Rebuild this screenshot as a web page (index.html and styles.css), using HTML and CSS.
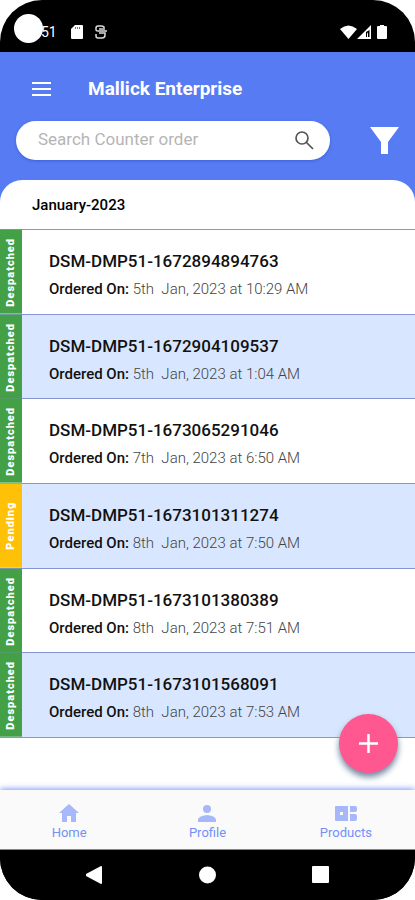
FILE: index.html
```html
<!DOCTYPE html>
<html lang="en">
<head>
  <meta charset="UTF-8">
  <meta name="viewport" content="width=device-width, initial-scale=1.0">
  <title>Mallick Enterprise</title>
  <link rel="stylesheet" href="styles.css">
</head>
<body>
  <div class="phone">
    <div class="status-bar">
      <span class="camera"></span>
      <span class="time">51</span>
      <svg class="sd-icon" width="12" height="14" viewBox="0 0 12 14"><path fill="#fff" d="M4 0h7q1 0 1 1v12q0 1-1 1H1q-1 0-1-1V4z"/><path stroke="#777" d="M4.500 2v2M6.500 2v2M8.500 2v2"/></svg>
      <svg class="s-icon" width="12" height="14" viewBox="0 0 12 14" fill="none" stroke="#ddd" stroke-width="1.500"><path d="M9 3V2Q8 1 6 1H3Q1 1 1 3v2q0 1 2 1h9M1 9v2q0 2 2 2h4q3 0 3-3V8H4M4 4h6"/></svg>
      <div class="status-right">
        <svg width="17" height="14" viewBox="0 0 17 14"><path fill="#fff" d="M0 4Q8.500-3 17 4L8.500 14z"/></svg>
        <svg width="14" height="14" viewBox="0 0 14 14"><path fill="#fff" fill-rule="evenodd" d="M14 0v14H0zM12.500 5L9 7v5h1V9l1-2v5h1.500z"/></svg>
        <svg class="battery" width="10" height="14" viewBox="0 0 10 14"><path fill="#fff" d="M3 0h4v1h2q1 0 1 1v11q0 1-1 1H1q-1 0-1-1V2q0-1 1-1h2z"/></svg>
      </div>
    </div>

    <header class="header">
      <div class="title-row">
        <button class="icon-button" aria-label="Menu">
          <svg width="19" height="14" viewBox="0 0 19 14"><path stroke="#fff" stroke-width="2" d="M0 1h19M0 7h19M0 13h19"/></svg>
        </button>
        <h1>Mallick Enterprise</h1>
      </div>
      <div class="search-row">
        <form class="search">
          <input type="text" placeholder="Search Counter order" aria-label="Search Counter order">
          <button type="button" class="icon-button" aria-label="Search">
            <svg width="19" height="19" viewBox="0 0 19 19" fill="none" stroke="#555" stroke-width="1.700"><circle cx="7" cy="7" r="6"/><path d="M11 11l7 7"/></svg>
          </button>
        </form>
        <button class="icon-button" aria-label="Filter">
          <svg width="29" height="27" viewBox="0 0 29 27"><path fill="#fff" d="M0 0h29L18 15v12h-7V15z"/></svg>
        </button>
      </div>
    </header>

    <main class="content">
      <section class="panel">
        <h2>January-2023</h2>
        <ul class="orders">
          <li class="order">
            <span class="status">Despatched</span>
            <div class="details">
              <h3>DSM-DMP51-1672894894763</h3>
              <p><b>Ordered On:</b> 5th&nbsp; Jan, 2023 at 10:29 AM</p>
            </div>
          </li>
          <li class="order">
            <span class="status">Despatched</span>
            <div class="details">
              <h3>DSM-DMP51-1672904109537</h3>
              <p><b>Ordered On:</b> 5th&nbsp; Jan, 2023 at 1:04 AM</p>
            </div>
          </li>
          <li class="order">
            <span class="status">Despatched</span>
            <div class="details">
              <h3>DSM-DMP51-1673065291046</h3>
              <p><b>Ordered On:</b> 7th&nbsp; Jan, 2023 at 6:50 AM</p>
            </div>
          </li>
          <li class="order">
            <span class="status pending">Pending</span>
            <div class="details">
              <h3>DSM-DMP51-1673101311274</h3>
              <p><b>Ordered On:</b> 8th&nbsp; Jan, 2023 at 7:50 AM</p>
            </div>
          </li>
          <li class="order">
            <span class="status">Despatched</span>
            <div class="details">
              <h3>DSM-DMP51-1673101380389</h3>
              <p><b>Ordered On:</b> 8th&nbsp; Jan, 2023 at 7:51 AM</p>
            </div>
          </li>
          <li class="order">
            <span class="status">Despatched</span>
            <div class="details">
              <h3>DSM-DMP51-1673101568091</h3>
              <p><b>Ordered On:</b> 8th&nbsp; Jan, 2023 at 7:53 AM</p>
            </div>
          </li>
        </ul>
      </section>
      <button class="add-button" aria-label="Add order">
        <svg width="19" height="19" viewBox="0 0 19 19"><path stroke="#fff" stroke-width="2.500" d="M9.500 0v19M0 9.500h19"/></svg>
      </button>
    </main>

    <nav class="tabs">
      <a href="#home">
        <svg width="20" height="18" viewBox="0 0 20 18"><path fill="#a6b8fa" d="M10 0l10 9h-3v9h-5v-6H8v6H3V9H0z"/></svg>
        Home
      </a>
      <a href="#profile">
        <svg width="18" height="18" viewBox="0 0 18 18" fill="#a6b8fa"><circle cx="9" cy="5" r="4"/><path d="M0 18v-2q0-4 9-5 9 1 9 5v2z"/></svg>
        Profile
      </a>
      <a href="#products">
        <svg width="22" height="18" viewBox="0 0 22 18" fill="#a6b8fa"><path fill-rule="evenodd" d="M1 2h12v15H1q-1 0-1-1V3q0-1 1-1zM5 8v3h3V8z"/><path d="M15 2h5q2 0 2 2v2q0 2-2 2h-5zM15 10h5q2 0 2 2v3q0 2-2 2h-5z"/></svg>
        Products
      </a>
    </nav>

    <div class="system-nav">
      <button class="icon-button" aria-label="Back"><svg width="16" height="18" viewBox="0 0 16 18"><path fill="#fff" d="M15 0q1 0 1 1v16q0 1-1 1L0 10V8z"/></svg></button>
      <button class="icon-button" aria-label="Home screen"><svg width="17" height="18" viewBox="0 0 17 18"><circle cx="8.500" cy="9" r="8.500" fill="#fff"/></svg></button>
      <button class="icon-button" aria-label="Recent apps"><svg width="17" height="18" viewBox="0 0 17 18"><rect width="17" height="17" rx="1" fill="#fff"/></svg></button>
    </div>
  </div>
</body>
</html>
```
FILE: styles.css
```css
* {
  box-sizing: border-box;
}
body {
  margin: 0;
  background: #fff;
  font-family: Roboto, "Liberation Sans", sans-serif;
}
h1, h2, h3, p, ul {
  margin: 0;
  padding: 0;
}
svg {
  display: block;
}
.phone {
  display: flex;
  flex-direction: column;
  min-height: 100vh;
  border-radius: 42px;
  overflow: hidden;
  background: #000;
}
.icon-button {
  display: flex;
  padding: 0;
  border: 0;
  background: none;
}

/* Status bar */
.status-bar {
  display: flex;
  align-items: center;
  height: 52px;
  padding: 12px 28px 0 14px;
  color: #fff;
}
.camera {
  width: 29px;
  height: 29px;
  margin-top: -8px;
  border-radius: 50%;
  background: #fff;
}
.time {
  margin-left: -2px;
  font-size: 14px;
}
.sd-icon {
  margin-left: 14px;
}
.s-icon {
  margin-left: 12px;
}
.status-right {
  display: flex;
  margin-left: auto;
}
.battery {
  margin-left: 6px;
}

/* Header */
.header {
  padding: 24px 16px 20px;
  background: #567bf3;
}
.title-row {
  display: flex;
  align-items: center;
  gap: 37px;
  padding-left: 16px;
}
.title-row h1 {
  color: #fff;
  font-size: 19px;
  font-weight: 700;
  line-height: 26px;
}
.search-row {
  display: flex;
  align-items: center;
  gap: 40px;
  margin-top: 19px;
}
.search {
  display: flex;
  flex: 1;
  align-items: center;
  height: 39px;
  padding: 0 16px 0 22px;
  border-radius: 20px;
  background: #fff;
  box-shadow: 0 1px 3px #3d60d8;
}
.search input {
  flex: 1;
  min-width: 0;
  padding: 0 0 4px;
  border: 0;
  outline: 0;
  background: none;
  font: 17px/24px Roboto, "Liberation Sans", sans-serif;
}
.search input::placeholder {
  color: #b5b5b5;
}

/* Orders */
.content {
  position: relative;
  flex: 1;
  background: linear-gradient(#567bf3 50px, #fff 50px);
}
.panel {
  border-radius: 22px 22px 0 0;
  background: #fff;
}
.panel h2 {
  padding: 15px 32px 14px;
  font-size: 15px;
  font-weight: 500;
  line-height: 20px;
}
.orders {
  display: grid;
  grid-auto-rows: 1fr;
  min-height: 509px;
  border-top: 1px solid #8795d2;
  list-style: none;
}
.order {
  display: flex;
  border-bottom: 1px solid #8795d2;
}
.order:nth-child(even) {
  background: #d8e7ff;
}
.status {
  width: 22px;
  background: #43a047;
  color: #fff;
  font-size: 11px;
  font-weight: 900;
  line-height: 22px;
  text-align: center;
  letter-spacing: 1px;
  writing-mode: vertical-rl;
  transform: rotate(180deg);
}
.pending {
  background: #ffc107;
}
.details {
  padding: 19px 27px 0;
}
.details h3 {
  color: #111;
  font-size: 17px;
  font-weight: 500;
  line-height: 24px;
}
.details p {
  margin-top: 5px;
  color: #444;
  font-size: 15px;
  font-weight: 300;
  line-height: 22px;
}
.details b {
  color: #111;
  font-weight: 500;
}
.add-button {
  position: absolute;
  right: 17px;
  bottom: 17px;
  display: flex;
  align-items: center;
  justify-content: center;
  width: 59px;
  height: 59px;
  padding: 0;
  border: 0;
  border-radius: 50%;
  background: #ff5790;
  box-shadow: 0 4px 6px #6f86a0;
}

/* Bottom tabs */
.tabs {
  position: relative;
  display: flex;
  height: 60px;
  border-bottom: 1px solid #888;
  background: #fafafa;
  box-shadow: 0 -1px 6px #7d97f5;
}
.tabs a {
  display: flex;
  flex: 1;
  flex-direction: column;
  align-items: center;
  gap: 3px;
  padding-top: 14px;
  color: #7390f8;
  font-size: 13px;
  line-height: 16px;
  text-decoration: none;
}

/* System buttons */
.system-nav {
  position: relative;
  display: flex;
  align-items: center;
  justify-content: space-between;
  height: 50px;
  padding: 0 86px;
  background: #000;
}
```
